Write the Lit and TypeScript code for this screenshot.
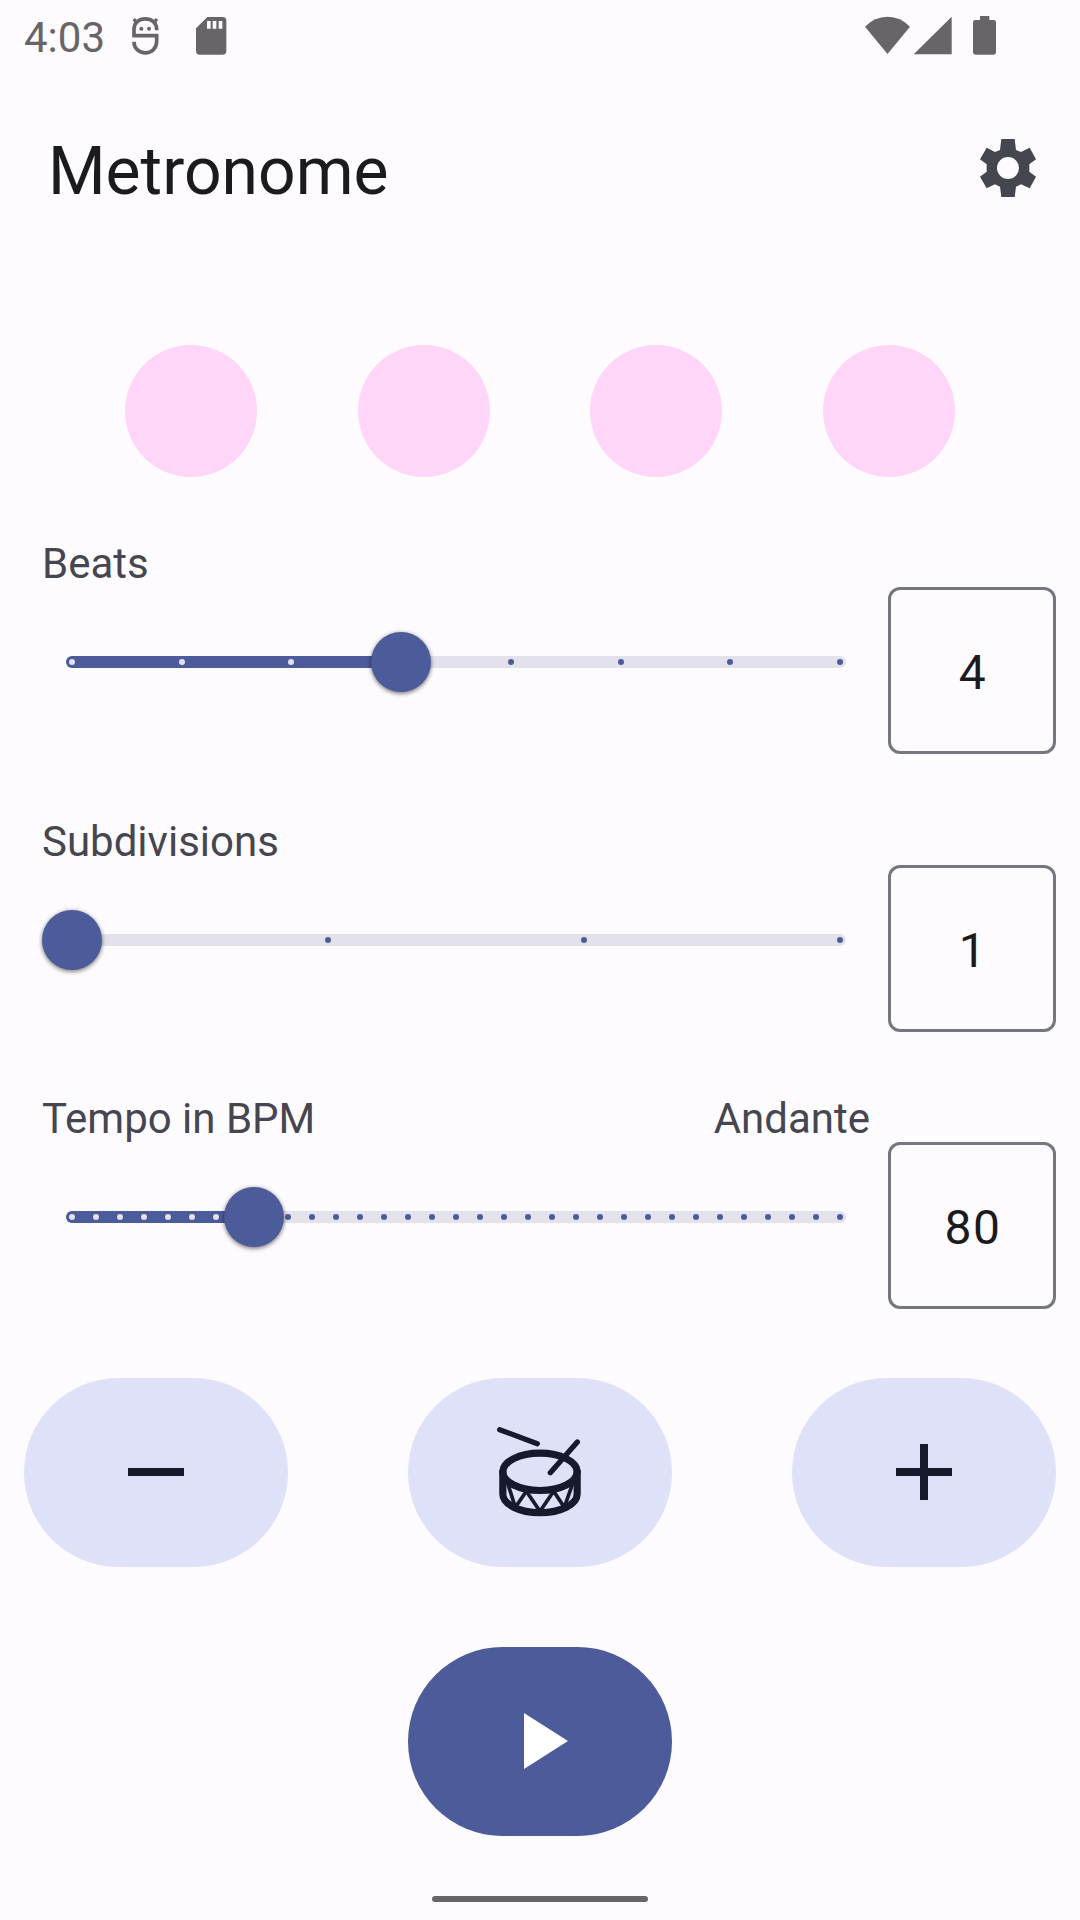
import { LitElement, html, css, svg } from "lit";
import { customElement, property } from "lit/decorators.js";
import { classMap } from "lit/directives/class-map.js";
import { styleMap } from "lit/directives/style-map.js";

@customElement("stepped-slider")
class SteppedSlider extends LitElement {
  @property({ type: Number }) ticks = 2;
  @property({ type: Number }) fraction = 0;

  static styles = css`
    :host {
      display: block;
      padding: 0 6px;
    }
    .rail {
      position: relative;
      height: 60px;
      display: flex;
      align-items: center;
    }
    .track {
      flex: 1;
      margin: 0 -6px;
      height: 12px;
      border-radius: 6px;
      background: #e3e1ec;
      display: flex;
      align-items: center;
      justify-content: space-between;
      padding: 0 3px;
      position: relative;
    }
    .active {
      position: absolute;
      left: 0;
      top: 0;
      height: 12px;
      border-radius: 6px;
      background: #4c5b99;
    }
    .tick {
      position: relative;
      width: 6px;
      height: 6px;
      border-radius: 50%;
      background: #4c5b99;
    }
    .tick.on {
      background: #e3e1ec;
    }
    .thumb {
      position: absolute;
      top: 0;
      width: 60px;
      height: 60px;
      margin-left: -30px;
      border-radius: 50%;
      background: #4c5b99;
      box-shadow: 0 2px 4px rgba(0, 0, 0, 0.4), 0 0 4px rgba(0, 0, 0, 0.2);
    }
  `;

  render() {
    const pos = `${this.fraction * 100}%`;
    return html`<div class="rail">
      <div class="track">
        <div class="active" style=${styleMap({ width: pos })}></div>
        ${Array.from({ length: this.ticks }, (_, i) => {
          const on = i / (this.ticks - 1) <= this.fraction;
          return html`<span class=${classMap({ tick: true, on })}></span>`;
        })}
      </div>
      <div class="thumb" style=${styleMap({ left: pos })}></div>
    </div>`;
  }
}

interface Control {
  label: string;
  note?: string;
  value: number;
  ticks: number;
  fraction: number;
}

const CONTROLS: Control[] = [
  { label: "Beats", value: 4, ticks: 8, fraction: 3 / 7 },
  { label: "Subdivisions", value: 1, ticks: 4, fraction: 0 },
  { label: "Tempo in BPM", note: "Andante", value: 80, ticks: 33, fraction: 40 / 169 },
];

const minusIcon = svg`<path d="M5 11h14v2H5z" fill="currentColor"/>`;
const plusIcon = svg`<path d="M11 5h2v6h6v2h-6v6h-2v-6H5v-2h6z" fill="currentColor"/>`;
const playIcon = svg`<path d="M8 5v14l11-7z" fill="currentColor"/>`;

@customElement("app-root")
class AppRoot extends LitElement {
  static styles = css`
    :host {
      display: block;
      font-family: Roboto, "Liberation Sans", sans-serif;
      color: #1b1b1f;
    }
    .screen {
      width: 1080px;
      height: 1920px;
      box-sizing: border-box;
      background: #fefbff;
      display: flex;
      flex-direction: column;
      overflow: hidden;
    }
    .status {
      height: 72px;
      display: flex;
      align-items: flex-start;
      padding: 0 82px 0 24px;
      color: #676568;
    }
    .clock {
      font-size: 42px;
      line-height: 50px;
      margin-top: 13px;
      width: 106px;
    }
    .status svg {
      display: block;
      margin-top: 15px;
    }
    .sd {
      margin-left: 30px;
    }
    .space {
      flex: 1;
    }
    .signal {
      margin-left: 3px;
    }
    .battery {
      margin-left: 20px;
    }
    .bar {
      height: 192px;
      box-sizing: border-box;
      padding: 0 36px 0 48px;
      display: flex;
      align-items: center;
      justify-content: space-between;
    }
    h1 {
      margin: 8px 0 0;
      font-size: 66px;
      line-height: 84px;
      font-weight: 400;
    }
    .gear {
      color: #45464f;
      display: block;
    }
    .beats {
      margin-top: 81px;
      height: 132px;
      padding: 0 125px;
      display: flex;
      justify-content: space-between;
    }
    .beat {
      width: 132px;
      height: 132px;
      border-radius: 50%;
      background: #ffd6f8;
    }
    .controls {
      margin-top: 57px;
      padding: 0 24px 0 42px;
      display: flex;
      flex-direction: column;
    }
    .control {
      height: 220px;
      margin-bottom: 58px;
      display: flex;
      justify-content: space-between;
    }
    .control + .control {
      margin-bottom: 57px;
    }
    .left {
      width: 828px;
    }
    .labels {
      display: flex;
      justify-content: space-between;
      font-size: 42px;
      line-height: 60px;
      color: #45464f;
    }
    .slider {
      margin: 38px 24px 0;
    }
    .value {
      width: 168px;
      height: 167px;
      margin-top: 53px;
      box-sizing: border-box;
      border: 3px solid #767680;
      border-radius: 12px;
      display: flex;
      align-items: center;
      justify-content: center;
      font-size: 48px;
      line-height: 72px;
      letter-spacing: 1.5px;
      padding: 5px 0 0 2px;
    }
    .actions {
      margin-top: 12px;
      padding: 0 24px;
      display: flex;
      justify-content: space-between;
    }
    .btn {
      width: 264px;
      height: 189px;
      box-sizing: border-box;
      border: 0;
      padding: 0 0 1px;
      border-radius: 95px;
      background: #dfe1f9;
      color: #171a2c;
      display: flex;
      align-items: center;
      justify-content: center;
    }
    .play {
      background: #4c5b99;
      color: #fff;
      margin: 80px auto 0;
    }
    .handle {
      width: 216px;
      height: 6px;
      border-radius: 3px;
      background: #676568;
      margin: 60px auto 0;
    }
  `;

  private statusBar() {
    return html`<div class="status">
      <span class="clock">4:03</span>
      <svg width="30" height="42" viewBox="390 45 90 126" fill="none" stroke="currentColor" stroke-width="11">
        <path d="M401 57l8 9M471 57l-8 9" stroke-width="10" />
        <path d="M470 91V88C470 68 455 56.500 436 56.500S402 68 402 88V107H470V124C470 146 454 158.500 436 158.500S402 146 402 125" />
        <circle cx="424" cy="86" r="6" fill="currentColor" stroke="none" />
        <circle cx="447" cy="86" r="6" fill="currentColor" stroke="none" />
      </svg>
      <svg class="sd" width="42" height="42" viewBox="570 45 126 126">
        <path
          fill="currentColor"
          fill-rule="evenodd"
          d="M622 51H668Q679 51 679 62V153Q679 164 668 164H599Q588 164 588 153V85ZM621 63V86H632V63ZM638 63V86H649V63ZM656 63V86H667V63Z"
        />
      </svg>
      <span class="space"></span>
      <svg width="45" height="42" viewBox="75 45 135 126">
        <path fill="currentColor" d="M75 80Q103 50 142.500 50T210 80L142.500 162Z" />
      </svg>
      <svg class="signal" width="39" height="42" viewBox="219 45 117 126">
        <path fill="currentColor" d="M335 50V163H221Z" />
      </svg>
      <svg class="battery" width="26" height="42" viewBox="396 45 78 126">
        <path
          fill="currentColor"
          d="M420 48H448V60H461Q468 60 468 67V157Q468 164 461 164H406Q399 164 399 157V67Q399 60 406 60H420Z"
        />
      </svg>
    </div>`;
  }

  private drum() {
    return html`<svg width="96" height="96" viewBox="276 162 288 288" fill="none" stroke="currentColor" stroke-linecap="round">
      <ellipse cx="420" cy="305.500" rx="111.500" ry="56" stroke-width="21.500" />
      <path d="M308.500 305V372C308.500 403 358 428 420 428S531.500 403 531.500 372V305" stroke-width="21.500" />
      <path d="M299 179L412 221M532 216L451 308" stroke-width="16" />
      <path d="M325 346L346 412L379 364L420 424L461 364L493 412L516 346" stroke-width="11" />
    </svg>`;
  }

  render() {
    return html`<div class="screen">
      ${this.statusBar()}
      <div class="bar">
        <h1>Metronome</h1>
        <svg class="gear" width="72" height="72" viewBox="396 396 216 216">
          <path
            fill="currentColor"
            fill-rule="evenodd"
            d="M484 417H524L528 450L543 456L569 443L588 478L568 493V515L588 530L569 565L543 553L528 560L524 591H484L480 560L465 553L440 565L420 530L440 515V493L420 478L440 443L465 456L480 450ZM504 471A33 33 0 1 0 504 537A33 33 0 1 0 504 471Z"
          />
        </svg>
      </div>
      <div class="beats">${[1, 2, 3, 4].map(() => html`<div class="beat"></div>`)}</div>
      <div class="controls">
        ${CONTROLS.map(
          (c) => html`<div class="control">
            <div class="left">
              <div class="labels"><span>${c.label}</span><span>${c.note ?? ""}</span></div>
              <stepped-slider class="slider" .ticks=${c.ticks} .fraction=${c.fraction}></stepped-slider>
            </div>
            <div class="value">${c.value}</div>
          </div>`
        )}
      </div>
      <div class="actions">
        <button class="btn"><svg width="96" height="96" viewBox="0 0 24 24">${minusIcon}</svg></button>
        <button class="btn">${this.drum()}</button>
        <button class="btn"><svg width="96" height="96" viewBox="0 0 24 24">${plusIcon}</svg></button>
      </div>
      <button class="btn play"><svg width="96" height="96" viewBox="0 0 24 24">${playIcon}</svg></button>
      <div class="handle"></div>
    </div>`;
  }
}
